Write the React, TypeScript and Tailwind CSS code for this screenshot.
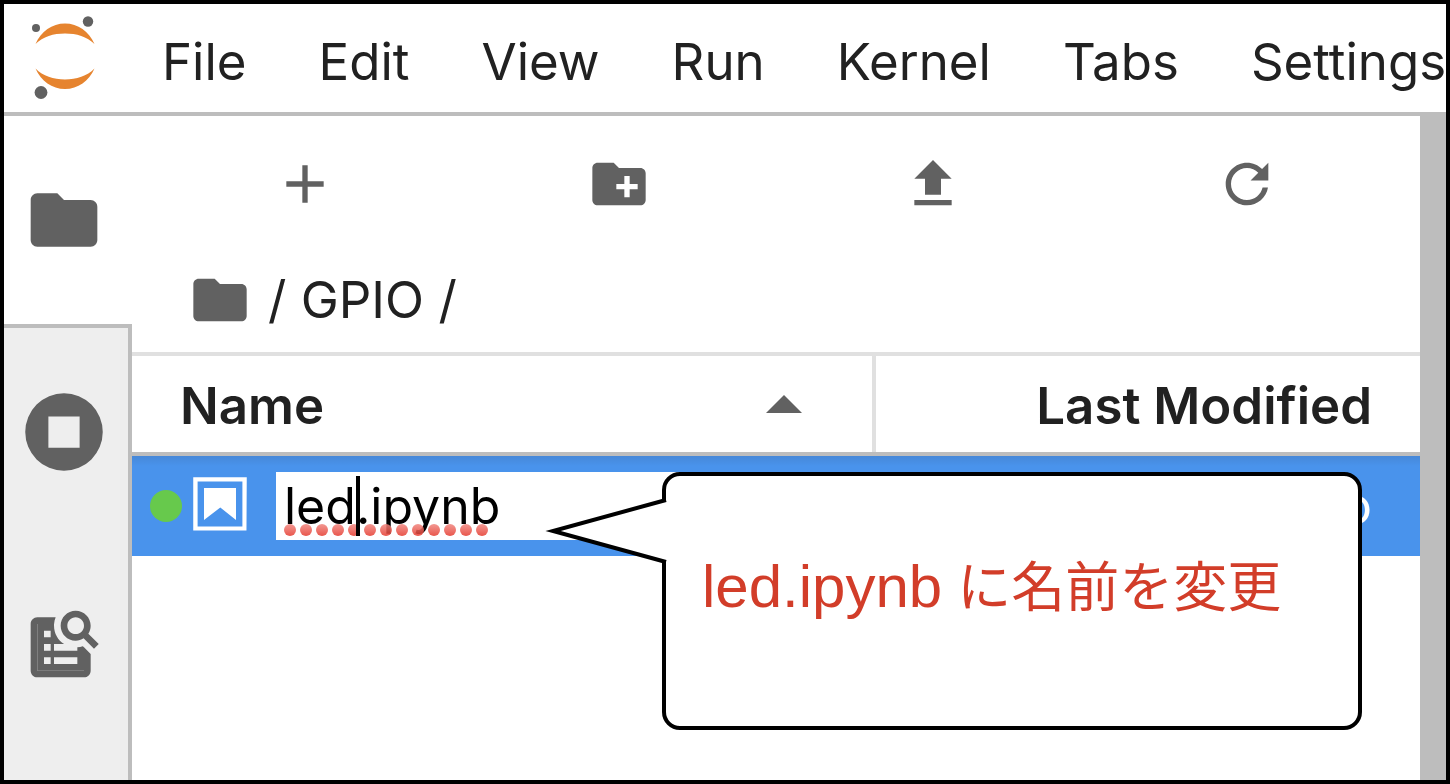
import type { ReactNode } from 'react';

const menus = ['File', 'Edit', 'View', 'Run', 'Kernel', 'Tabs', 'Settings'];

const FOLDER =
  'M10 4H4c-1.1 0-1.99.9-1.99 2L2 18c0 1.1.9 2 2 2h16c1.1 0 2-.9 2-2V8c0-1.1-.9-2-2-2h-8l-2-2z';

function Icon({ size = 24, className, children }: { size?: number; className: string; children: ReactNode }) {
  return (
    <svg viewBox={`0 0 ${size} ${size}`} className={className} fill="currentColor" aria-hidden="true">
      {children}
    </svg>
  );
}

function Logo() {
  return (
    <svg viewBox="0 0 68 88" className="h-[88px] w-[68px] shrink-0" role="img" aria-label="Jupyter">
      <g fill="#e6842f">
        <path d="M5.500 30C11 17.500 22 9.500 35 9.500S59 17.500 64.500 30C57 22.500 46.500 19.500 35 19.500S13 22.500 5.500 30z" />
        <path d="M5.500 54.500C13 62 23.500 65.500 35 65.500S57 62 64.500 54.500C59 67 48 75 35 75S11 67 5.500 54.500z" />
      </g>
      <g fill="#616161">
        <circle cx="6" cy="14" r="4" />
        <circle cx="58" cy="7.500" r="5.200" />
        <circle cx="11" cy="78.500" r="6.400" />
      </g>
    </svg>
  );
}

function SideBar() {
  const tab = 'flex h-[208px] w-[120px] items-center justify-center';
  return (
    <nav aria-label="Side bar" className="flex w-32 shrink-0 flex-col text-[#616161]">
      <button type="button" aria-label="File Browser" className={tab}>
        <Icon className="h-20 w-20"><path d={FOLDER} /></Icon>
      </button>
      <div className="flex flex-1 flex-col gap-1 border-t-4 border-r-4 border-[#bdbdbd] bg-[#eeeeee]">
        <button type="button" aria-label="Running Terminals and Kernels" className={tab}>
          <Icon size={512} className="h-20 w-20">
            <path fillRule="evenodd" d="M256 8a248 248 0 1 0 0 496 248 248 0 0 0 0-496zM156 156h200v200H156z" />
          </Icon>
        </button>
        <button type="button" aria-label="Commands" className={tab}>
          <Icon className="h-20 w-20">
            <path
              fillRule="evenodd"
              clipRule="evenodd"
              d="M18 13V20H4V6H9.02C9.07 5.29 9.24 4.62 9.5 4H4C2.9 4 2 4.9 2 6V20C2 21.1 2.9 22 4 22H18C19.1 22 20 21.1 20 20V15L18 13ZM19.3 8.89C19.74 8.19 20 7.38 20 6.5C20 4.01 17.99 2 15.5 2C13.01 2 11 4.01 11 6.5C11 8.99 13.01 11 15.49 11C16.37 11 17.19 10.74 17.88 10.3L21 13.42L22.42 12L19.3 8.89ZM15.5 9C14.12 9 13 7.88 13 6.5C13 5.12 14.12 4 15.5 4C16.88 4 18 5.12 18 6.5C18 7.88 16.88 9 15.5 9Z"
            />
            <path
              fillRule="evenodd"
              clipRule="evenodd"
              d="M4 6H9.019C9.006 6.165 9 6.332 9 6.5C9 8.816 10.211 10.849 12.034 12H9V14H16V12.981C16.57 12.938 17.12 12.821 17.64 12.64L18 13V20H4V6ZM8 8H6V10H8V8ZM6 12H8V14H6V12ZM8 16H6V18H8V16ZM9 16H16V18H9V16Z"
            />
          </Icon>
        </button>
      </div>
    </nav>
  );
}

function Toolbar() {
  const btn = 'flex flex-1 items-center justify-center';
  return (
    <div className="flex px-4 pt-9 text-[#616161]">
      <button type="button" aria-label="New Launcher" className={btn}>
        <Icon className="h-16 w-16"><path d="M19 13h-6v6h-2v-6H5v-2h6V5h2v6h6v2z" /></Icon>
      </button>
      <button type="button" aria-label="New Folder" className={btn}>
        <Icon className="h-16 w-16">
          <path d="M20 6h-8l-2-2H4c-1.11 0-1.99.89-1.99 2L2 18c0 1.11.89 2 2 2h16c1.11 0 2-.89 2-2V8c0-1.110-.89-2-2-2zm-1 8h-3v3h-2v-3h-3v-2h3V9h2v3h3v2z" />
        </Icon>
      </button>
      <button type="button" aria-label="Upload Files" className={btn}>
        <Icon className="h-16 w-16"><path d="M5 20h14v-2H5v2zm0-10h4v6h6v-6h4l-7-7-7 7z" /></Icon>
      </button>
      <button type="button" aria-label="Refresh File List" className={btn}>
        <Icon size={18} className="h-16 w-16">
          <path d="M9 13.500c-2.490 0-4.500-2.010-4.500-4.500S6.510 4.500 9 4.500c1.240 0 2.360.52 3.170 1.330L10 8h5V3l-1.760 1.760C12.150 3.680 10.660 3 9 3 5.690 3 3.010 5.690 3.010 9S5.690 15 9 15c2.970 0 5.430-2.160 5.900-5h-1.520c-.46 2-2.240 3.500-4.380 3.500z" />
        </Icon>
      </button>
    </div>
  );
}

function SpellingDots() {
  return (
    <svg viewBox="0 0 208 12" className="pointer-events-none absolute bottom-1 left-2 h-3 w-52" aria-hidden="true">
      <defs>
        <linearGradient id="dot" x1="0" y1="0" x2="0" y2="1">
          <stop offset="0" stopColor="#f0867f" />
          <stop offset="1" stopColor="#e5392d" />
        </linearGradient>
      </defs>
      {Array.from({ length: 13 }, (_, i) => (
        <circle key={i} cx={6 + i * 16} cy="6" r="6" fill="url(#dot)" fillOpacity="0.85" />
      ))}
    </svg>
  );
}

function FileTable() {
  return (
    <table className="w-full table-fixed border-collapse">
      <thead>
        <tr className="h-[100px] text-left">
          <th scope="col" className="p-0 font-semibold">
            <button type="button" className="flex h-24 w-full items-center justify-between border-r-4 border-[#e0e0e0] pr-[70px] pl-12">
              <span className="pt-1">Name</span>
              <svg viewBox="0 0 36 18" className="h-[18px] w-9" fill="#616161" aria-hidden="true">
                <path d="M0 18L18 0l18 18z" />
              </svg>
            </button>
            <div className="h-1 bg-[#bdbdbd]" />
          </th>
          <th scope="col" className="w-[544px] p-0 font-semibold">
            <button type="button" className="flex h-24 w-full items-center justify-end pr-12">
              <span className="pt-1">Last Modified</span>
            </button>
            <div className="h-1 bg-[#bdbdbd]" />
          </th>
        </tr>
      </thead>
      <tbody>
        <tr className="h-[100px] bg-[#4993ec] bg-linear-to-b from-[#4688d8] to-[#4993ec] to-10%">
          <td className="p-0">
            <div className="flex items-center pl-[18px]">
              <span className="h-8 w-8 shrink-0 rounded-full bg-[#67c94c]" />
              <Icon size={22} className="mb-1 ml-[6px] h-16 w-16 shrink-0 text-white">
                <path d="M18.700 3.300v15.400H3.300V3.300h15.400m1.500-1.500H1.800v18.300h18.300l.1-18.300z" />
                <path d="M16.500 16.500l-5.400-4.300-5.600 4.300v-11h11z" />
              </Icon>
              <div className="relative ml-6 flex-1">
                <input
                  aria-label="File name"
                  defaultValue="led.ipynb"
                  spellCheck={false}
                  className="block h-[68px] w-full bg-white px-2 text-[50px] text-black outline-none"
                />
                <SpellingDots />
                <span className="absolute top-1 left-20 h-[60px] w-1 bg-black" />
              </div>
            </div>
          </td>
          <td className="p-0 pr-12 text-right text-white">ago</td>
        </tr>
      </tbody>
    </table>
  );
}

function Callout() {
  return (
    <aside className="absolute top-[468px] left-[658px] flex h-[258px] w-[700px] items-center rounded-[18px] border-4 border-black bg-white pb-7 pl-9 text-[#d23d29]">
      <svg viewBox="0 0 122 70" className="absolute top-[20px] -left-[120px] h-[70px] w-[122px] overflow-visible" aria-hidden="true">
        <path d="M122 4L7 35l115 31z" fill="#fff" />
        <path d="M120 4L7 35l113 31" fill="none" stroke="#000" strokeWidth="4" strokeMiterlimit="10" />
      </svg>
      <p className="font-['Liberation_Sans','Noto_Sans_CJK_JP',sans-serif] text-[54px] leading-none whitespace-nowrap">
        <span className="text-[60px]">led.ipynb</span> に名前を変更
      </p>
    </aside>
  );
}

export default function App() {
  return (
    <div className="relative flex min-h-screen flex-col overflow-hidden border-4 border-black bg-white font-['Inter',sans-serif] text-[51px] leading-[64px] text-[#212121]">
      <header className="flex h-28 items-center border-b-4 border-[#bdbdbd] pl-[26px]">
        <Logo />
        <nav aria-label="Main menu" className="ml-7 flex pt-2">
          {menus.map((m) => (
            <button key={m} type="button" className="px-9">{m}</button>
          ))}
        </nav>
      </header>
      <div className="flex flex-1">
        <SideBar />
        <main className="min-w-0 flex-1">
          <Toolbar />
          <nav aria-label="Breadcrumb" className="mt-[52px] mb-5 flex items-center pl-14 whitespace-pre">
            <a href="#root" aria-label="Root folder" className="mr-4 text-[#616161]">
              <Icon className="h-16 w-16"><path d={FOLDER} /></Icon>
            </a>
            <span>/ </span>
            <a href="#gpio">GPIO</a>
            <span> /</span>
          </nav>
          <div className="h-1 bg-[#e0e0e0]" />
          <FileTable />
        </main>
        <div className="w-[26px] shrink-0 bg-[#bdbdbd]" />
      </div>
      <Callout />
    </div>
  );
}
